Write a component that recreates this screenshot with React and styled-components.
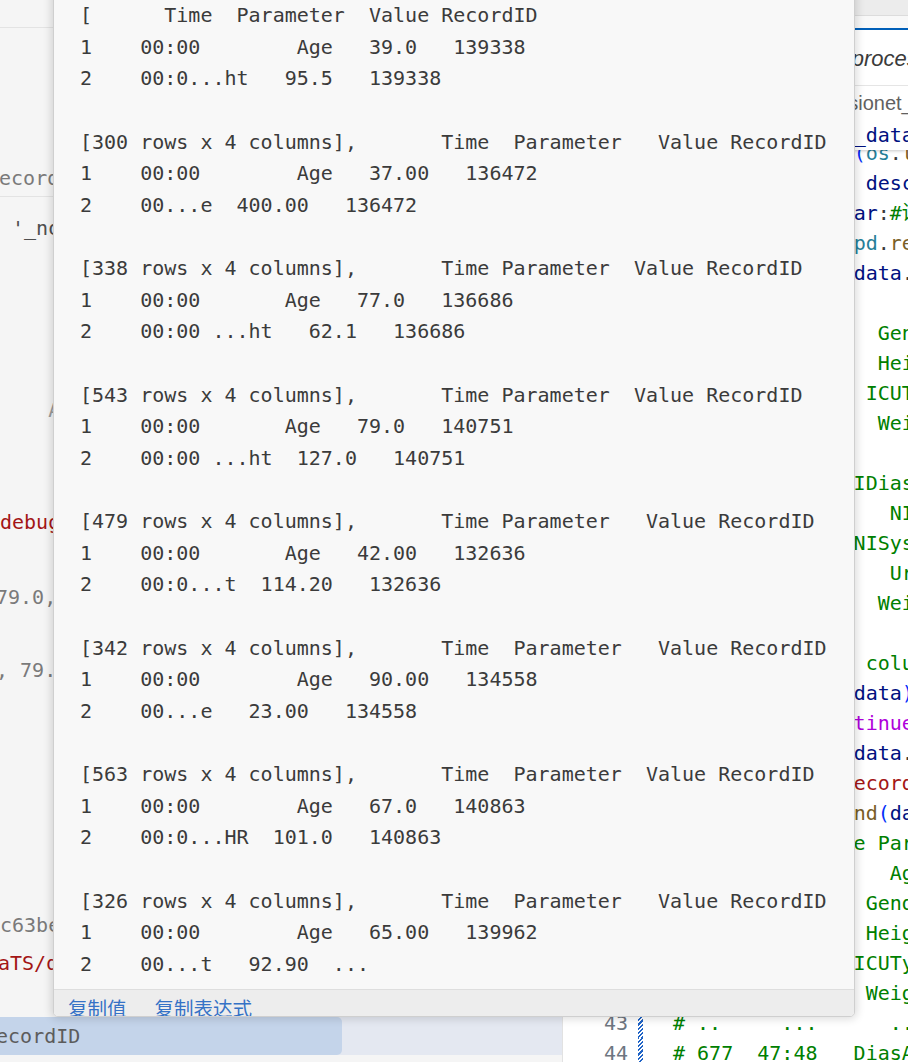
import React from 'react';
import styled, { createGlobalStyle } from 'styled-components';

const MONO = `"DejaVu Sans Mono", "Noto Sans CJK SC", monospace`;
const UI = `"Liberation Sans", "Noto Sans CJK SC", sans-serif`;

const GlobalStyle = createGlobalStyle`
  html, body {
    margin: 0;
    padding: 0;
    width: 908px;
    height: 1062px;
    overflow: hidden;
    background: #f8f8f8;
  }
  #root { height: 100%; }
`;

const Workbench = styled.div`
  position: relative;
  display: flex;
  width: 908px;
  height: 1062px;
  overflow: hidden;
  font-family: ${MONO};
`;

/* ---------- left panel (debug console) ---------- */

const Panel = styled.div`
  width: 563px;
  flex: none;
  box-sizing: border-box;
  display: flex;
  flex-direction: column;
  background: #f5f5f5;
  border-right: 1px solid #e2e2e2;
  overflow: hidden;
`;

const PanelHeader = styled.div`
  height: 27px;
  flex: none;
  border-bottom: 1px solid #e3e3e3;
`;

const toneColor = {
  grey: '#7a7a7a',
  light: '#9a9a9a',
  dark: '#4e4e4e',
  red: '#a31515',
};

const ConsoleLine = styled.div`
  flex: none;
  height: 30px;
  line-height: 30px;
  font-size: 20px;
  white-space: pre;
  margin-top: ${(p) => p.$gap || 0}px;
  text-indent: ${(p) => p.$shift || 0}px;
  color: ${(p) => toneColor[p.$tone] || toneColor.grey};
`;

const PanelRule = styled.div`
  flex: none;
  height: 1px;
  margin-top: 3px;
  background: #e3e3e3;
`;

const SelectionRow = styled.div`
  flex: none;
  height: 38px;
  margin-top: ${(p) => p.$gap}px;
  background: #e4e8f1;
  display: flex;
`;

const SelectionPill = styled.div`
  width: 342px;
  background: #c4d4ea;
  border-radius: 0 5px 5px 0;
  line-height: 38px;
  font-size: 20px;
  white-space: pre;
  text-indent: -16px;
  color: #5c5c5c;
  overflow: hidden;
`;

/* ---------- editor ---------- */

const Editor = styled.div`
  flex: 1;
  min-width: 0;
  display: flex;
  flex-direction: column;
  background: #ffffff;
  overflow: hidden;
`;

const TitleStrip = styled.div`
  height: 15px;
  flex: none;
  background: #ececec;
  border-bottom: 1px solid #dcdcdc;
`;

const TabsRow = styled.div`
  height: 70px;
  flex: none;
  box-sizing: border-box;
  padding-top: 12px;
  display: flex;
  background: #f8f8f8;
  border-bottom: 1px solid #e5e5e5;
`;

const Tab = styled.div`
  flex: none;
  box-sizing: border-box;
  width: ${(p) => (p.$w ? `${p.$w}px` : 'auto')};
  padding: ${(p) => (p.$active ? '2px 24px 0 17px' : '0 16px')};
  line-height: 54px;
  font-family: ${UI};
  font-size: ${(p) => (p.$active ? 22 : 20)}px;
  white-space: nowrap;
  overflow: hidden;
  font-style: ${(p) => (p.$active ? 'italic' : 'normal')};
  color: ${(p) => (p.$active ? '#3b3b3b' : '#868686')};
  background: ${(p) => (p.$active ? '#ffffff' : '#f8f8f8')};
  border-top: 2px solid ${(p) => (p.$active ? '#005fb8' : 'transparent')};
  border-right: 1px solid #e5e5e5;
`;

const Breadcrumbs = styled.div`
  height: 34px;
  flex: none;
  display: grid;
  grid-template-columns: 253px auto;
  align-items: center;
  font-family: ${UI};
  font-size: 20px;
  color: #616161;
  white-space: nowrap;
`;

const CrumbLead = styled.div`
  padding-left: 14px;
  overflow: hidden;
`;

const Crumb = styled.span``;

const CrumbSep = styled.span`
  margin: 0 6px;
  color: #9a9a9a;
`;

const StickyLine = styled.div`
  position: relative;
  z-index: 1;
  flex: none;
  background: #ffffff;
  box-shadow: 0 3px 3px -2px rgba(0, 0, 0, 0.22);
`;

const CodeViewport = styled.div`
  flex: 1;
  overflow: hidden;
`;

const CodeScroll = styled.div`
  margin-top: -12px;
`;

const CodeRow = styled.div`
  display: flex;
  height: 30px;
  line-height: 30px;
  font-size: 20px;
`;

const LineNo = styled.div`
  width: 65px;
  flex: none;
  text-align: right;
  color: #6e7681;
`;

const Deco = styled.div`
  width: 5px;
  flex: none;
  margin-left: 10px;
  background: ${(p) =>
    p.$mod
      ? 'repeating-linear-gradient(-45deg, #1f63c6 0 1.5px, #ffffff 1.5px 3px)'
      : 'transparent'};
`;

const CodeText = styled.div`
  margin-left: 30px;
  white-space: pre;
`;

const tokenColor = {
  p: '#3b3b3b',
  v: '#001080',
  t: '#267f99',
  f: '#795e26',
  k: '#af00db',
  s: '#a31515',
  c: '#008000',
  b: '#0431fa',
  b2: '#319331',
};

const Tok = styled.span`
  color: ${(p) => tokenColor[p.$k]};
`;

/* ---------- hover widget ---------- */

const HoverWidget = styled.div`
  position: absolute;
  z-index: 5;
  left: 53px;
  top: -9px;
  width: 802px;
  box-sizing: border-box;
  display: flex;
  flex-direction: column;
  background: #f8f8f8;
  border: 1px solid #cfcfcf;
  border-radius: 0 0 5px 5px;
  box-shadow: 0 0 8px 2px rgba(0, 0, 0, 0.14);
  overflow: hidden;
`;

const ValueView = styled.pre`
  margin: 0;
  height: 997px;
  box-sizing: border-box;
  padding: 8px 0 0 26px;
  overflow: hidden;
  font-family: ${MONO};
  font-size: 20px;
  line-height: 31.63px;
  color: #3b3b3b;
`;

const HoverFooter = styled.div`
  height: 27px;
  box-sizing: border-box;
  display: flex;
  gap: 28px;
  padding: 4px 0 0 14px;
  background: #ededed;
  border-top: 1px solid #dedede;
  overflow: hidden;
`;

const FooterAction = styled.span`
  font-family: "Noto Sans CJK SC", ${UI};
  font-size: 19.5px;
  line-height: 28px;
  color: #3572c6;
`;

/* ---------- data ---------- */

const VALUE_LINES = [
  '[      Time  Parameter  Value RecordID',
  '1    00:00        Age   39.0   139338',
  '2    00:0...ht   95.5   139338',
  '',
  '[300 rows x 4 columns],       Time  Parameter   Value RecordID',
  '1    00:00        Age   37.00   136472',
  '2    00...e  400.00   136472',
  '',
  '[338 rows x 4 columns],       Time Parameter  Value RecordID',
  '1    00:00       Age   77.0   136686',
  '2    00:00 ...ht   62.1   136686',
  '',
  '[543 rows x 4 columns],       Time Parameter  Value RecordID',
  '1    00:00       Age   79.0   140751',
  '2    00:00 ...ht  127.0   140751',
  '',
  '[479 rows x 4 columns],       Time Parameter   Value RecordID',
  '1    00:00       Age   42.00   132636',
  '2    00:0...t  114.20   132636',
  '',
  '[342 rows x 4 columns],       Time  Parameter   Value RecordID',
  '1    00:00        Age   90.00   134558',
  '2    00...e   23.00   134558',
  '',
  '[563 rows x 4 columns],       Time  Parameter  Value RecordID',
  '1    00:00        Age   67.0   140863',
  '2    00:0...HR  101.0   140863',
  '',
  '[326 rows x 4 columns],       Time  Parameter   Value RecordID',
  '1    00:00        Age   65.00   139962',
  '2    00...t   92.90  ...',
];

const param = (name) => [['#' + ' '.repeat(22 - name.length) + name, 'c']];
const note = (text) => [[text, 'c']];

const CODE = [
  [14, [['    ', 'p'], ['pbar', 'v'], [' = ', 'p'], ['tqdm', 'f'], ['(', 'b'], ['os', 't'], ['.', 'p'], ['listdir', 'f'], ['(', 'b2'], ['DATA_DIR', 'v'], [')', 'b2'], [',', 'p']]],
  [15, [['                ', 'p'], ['desc', 'v'], ['=', 'p'], ["'Processing'", 's'], [')', 'b']]],
  [16, [['    ', 'p'], ['for', 'k'], [' ', 'p'], ['f', 'v'], [' ', 'p'], ['in', 'k'], [' ', 'p'], ['pbar', 'v'], [':', 'p'], ['#读取文件', 'c']]],
  [17, [['        ', 'p'], ['data', 'v'], [' = ', 'p'], ['pd', 't'], ['.', 'p'], ['read_csv', 'f'], ['(', 'b'], ['f', 'v'], [')', 'b']]],
  [18, [['        ', 'p'], ['data', 'v'], [' = ', 'p'], ['data', 'v'], ['.', 'p'], ['set_index', 'f'], ['(', 'b'], ["'Time'", 's'], [')', 'b']]],
  [19, param('Age')],
  [20, param('Gender')],
  [21, param('Height')],
  [22, param('ICUType')],
  [23, param('Weight')],
  [24, param('Age')],
  [25, param('NIDiasABP')],
  [26, param('NIMAP')],
  [27, param('NISysABP')],
  [28, param('Urine')],
  [29, param('Weight')],
  [30, []],
  [31, note('#' + ' '.repeat(15) + 'columns')],
  [32, [['        ', 'p'], ['pprint', 'f'], ['(', 'b'], ['data', 'v'], [')', 'b']]],
  [33, [['            ', 'p'], ['continue', 'k']]],
  [34, [['        ', 'p'], ['data', 'v'], [' = ', 'p'], ['data', 'v'], ['.', 'p'], ['reset_index', 'f'], ['()', 'b']]],
  [35, [['        ', 'p'], ['data', 'v'], ['[', 'b'], ["'RecordID'", 's'], [']', 'b'], [' = ', 'p'], ['rid', 'v']]],
  [36, [['    ', 'p'], ['frames', 'v'], ['.', 'p'], ['append', 'f'], ['(', 'b'], ['data', 'v'], [')', 'b']]],
  [37, note('#           Time Parameter   Value  RecordID')],
  [38, note('# 0    00:00      Age   54.0   132539')],
  [39, note('# 1    00:00    Gender    0.0   132539')],
  [40, note('# 2    00:00    Height   -1.0   132539')],
  [41, note('# 3    00:00   ICUType    4.0   132539')],
  [42, note('# 4    00:00    Weight   -1.0   132539')],
  [43, note('# ..     ...      ...    ...      ...')],
  [44, note('# 677  47:48   DiasABP  58.0   132539')],
];

const CodeLine = ({ n, segs, mod }) => (
  <CodeRow>
    <LineNo>{n}</LineNo>
    <Deco $mod={mod} />
    <CodeText>
      {segs.map(([text, k], i) => (
        <Tok key={i} $k={k}>{text}</Tok>
      ))}
    </CodeText>
  </CodeRow>
);

export default function App() {
  return (
    <>
      <GlobalStyle />
      <Workbench>
        <Panel>
          <PanelHeader />
          <ConsoleLine $gap={135} $shift={-13} $tone="grey">RecordID', 'Time', 'Parameter', 'Value'</ConsoleLine>
          <PanelRule />
          <ConsoleLine $gap={16} $tone="dark"> '_norm', '_scaled'</ConsoleLine>
          <ConsoleLine $gap={152} $tone="light">    AUC</ConsoleLine>
          <ConsoleLine $gap={82} $tone="red">debugger attached</ConsoleLine>
          <ConsoleLine $gap={45} $shift={-4} $tone="grey">79.0, 79.0, 79.0, 79.0</ConsoleLine>
          <ConsoleLine $gap={43} $shift={-4} $tone="grey">, 79.0, 79.0, 79.0</ConsoleLine>
          <ConsoleLine $gap={225} $tone="grey">c63be0a1</ConsoleLine>
          <ConsoleLine $gap={8} $shift={-2} $tone="red">aTS/data/set-a</ConsoleLine>
          <SelectionRow $gap={39}>
            <SelectionPill>RecordID</SelectionPill>
          </SelectionRow>
        </Panel>

        <Editor>
          <TitleStrip />
          <TabsRow>
            <Tab $w={120}>analysis.py</Tab>
            <Tab $w={120}>utils.py</Tab>
            <Tab $active>preprocess.py</Tab>
          </TabsRow>
          <Breadcrumbs>
            <CrumbLead>
              <Crumb>src</Crumb>
              <CrumbSep>›</CrumbSep>
              <Crumb>data</Crumb>
              <CrumbSep>›</CrumbSep>
            </CrumbLead>
            <Crumb>physionet_2012 › preprocess.py</Crumb>
          </Breadcrumbs>
          <StickyLine>
            <CodeLine
              n={12}
              segs={[['for', 'k'], [' ', 'p'], ['path', 'v'], [' ', 'p'], ['in', 'k'], [' ', 'p'], ['all_data', 'v'], [':', 'p']]}
            />
          </StickyLine>
          <CodeViewport>
            <CodeScroll>
              {CODE.map(([n, segs]) => (
                <CodeLine key={n} n={n} segs={segs} mod={n >= 43} />
              ))}
            </CodeScroll>
          </CodeViewport>
        </Editor>

        <HoverWidget>
          <ValueView>{VALUE_LINES.join('\n')}</ValueView>
          <HoverFooter>
            <FooterAction>复制值</FooterAction>
            <FooterAction>复制表达式</FooterAction>
          </HoverFooter>
        </HoverWidget>
      </Workbench>
    </>
  );
}
